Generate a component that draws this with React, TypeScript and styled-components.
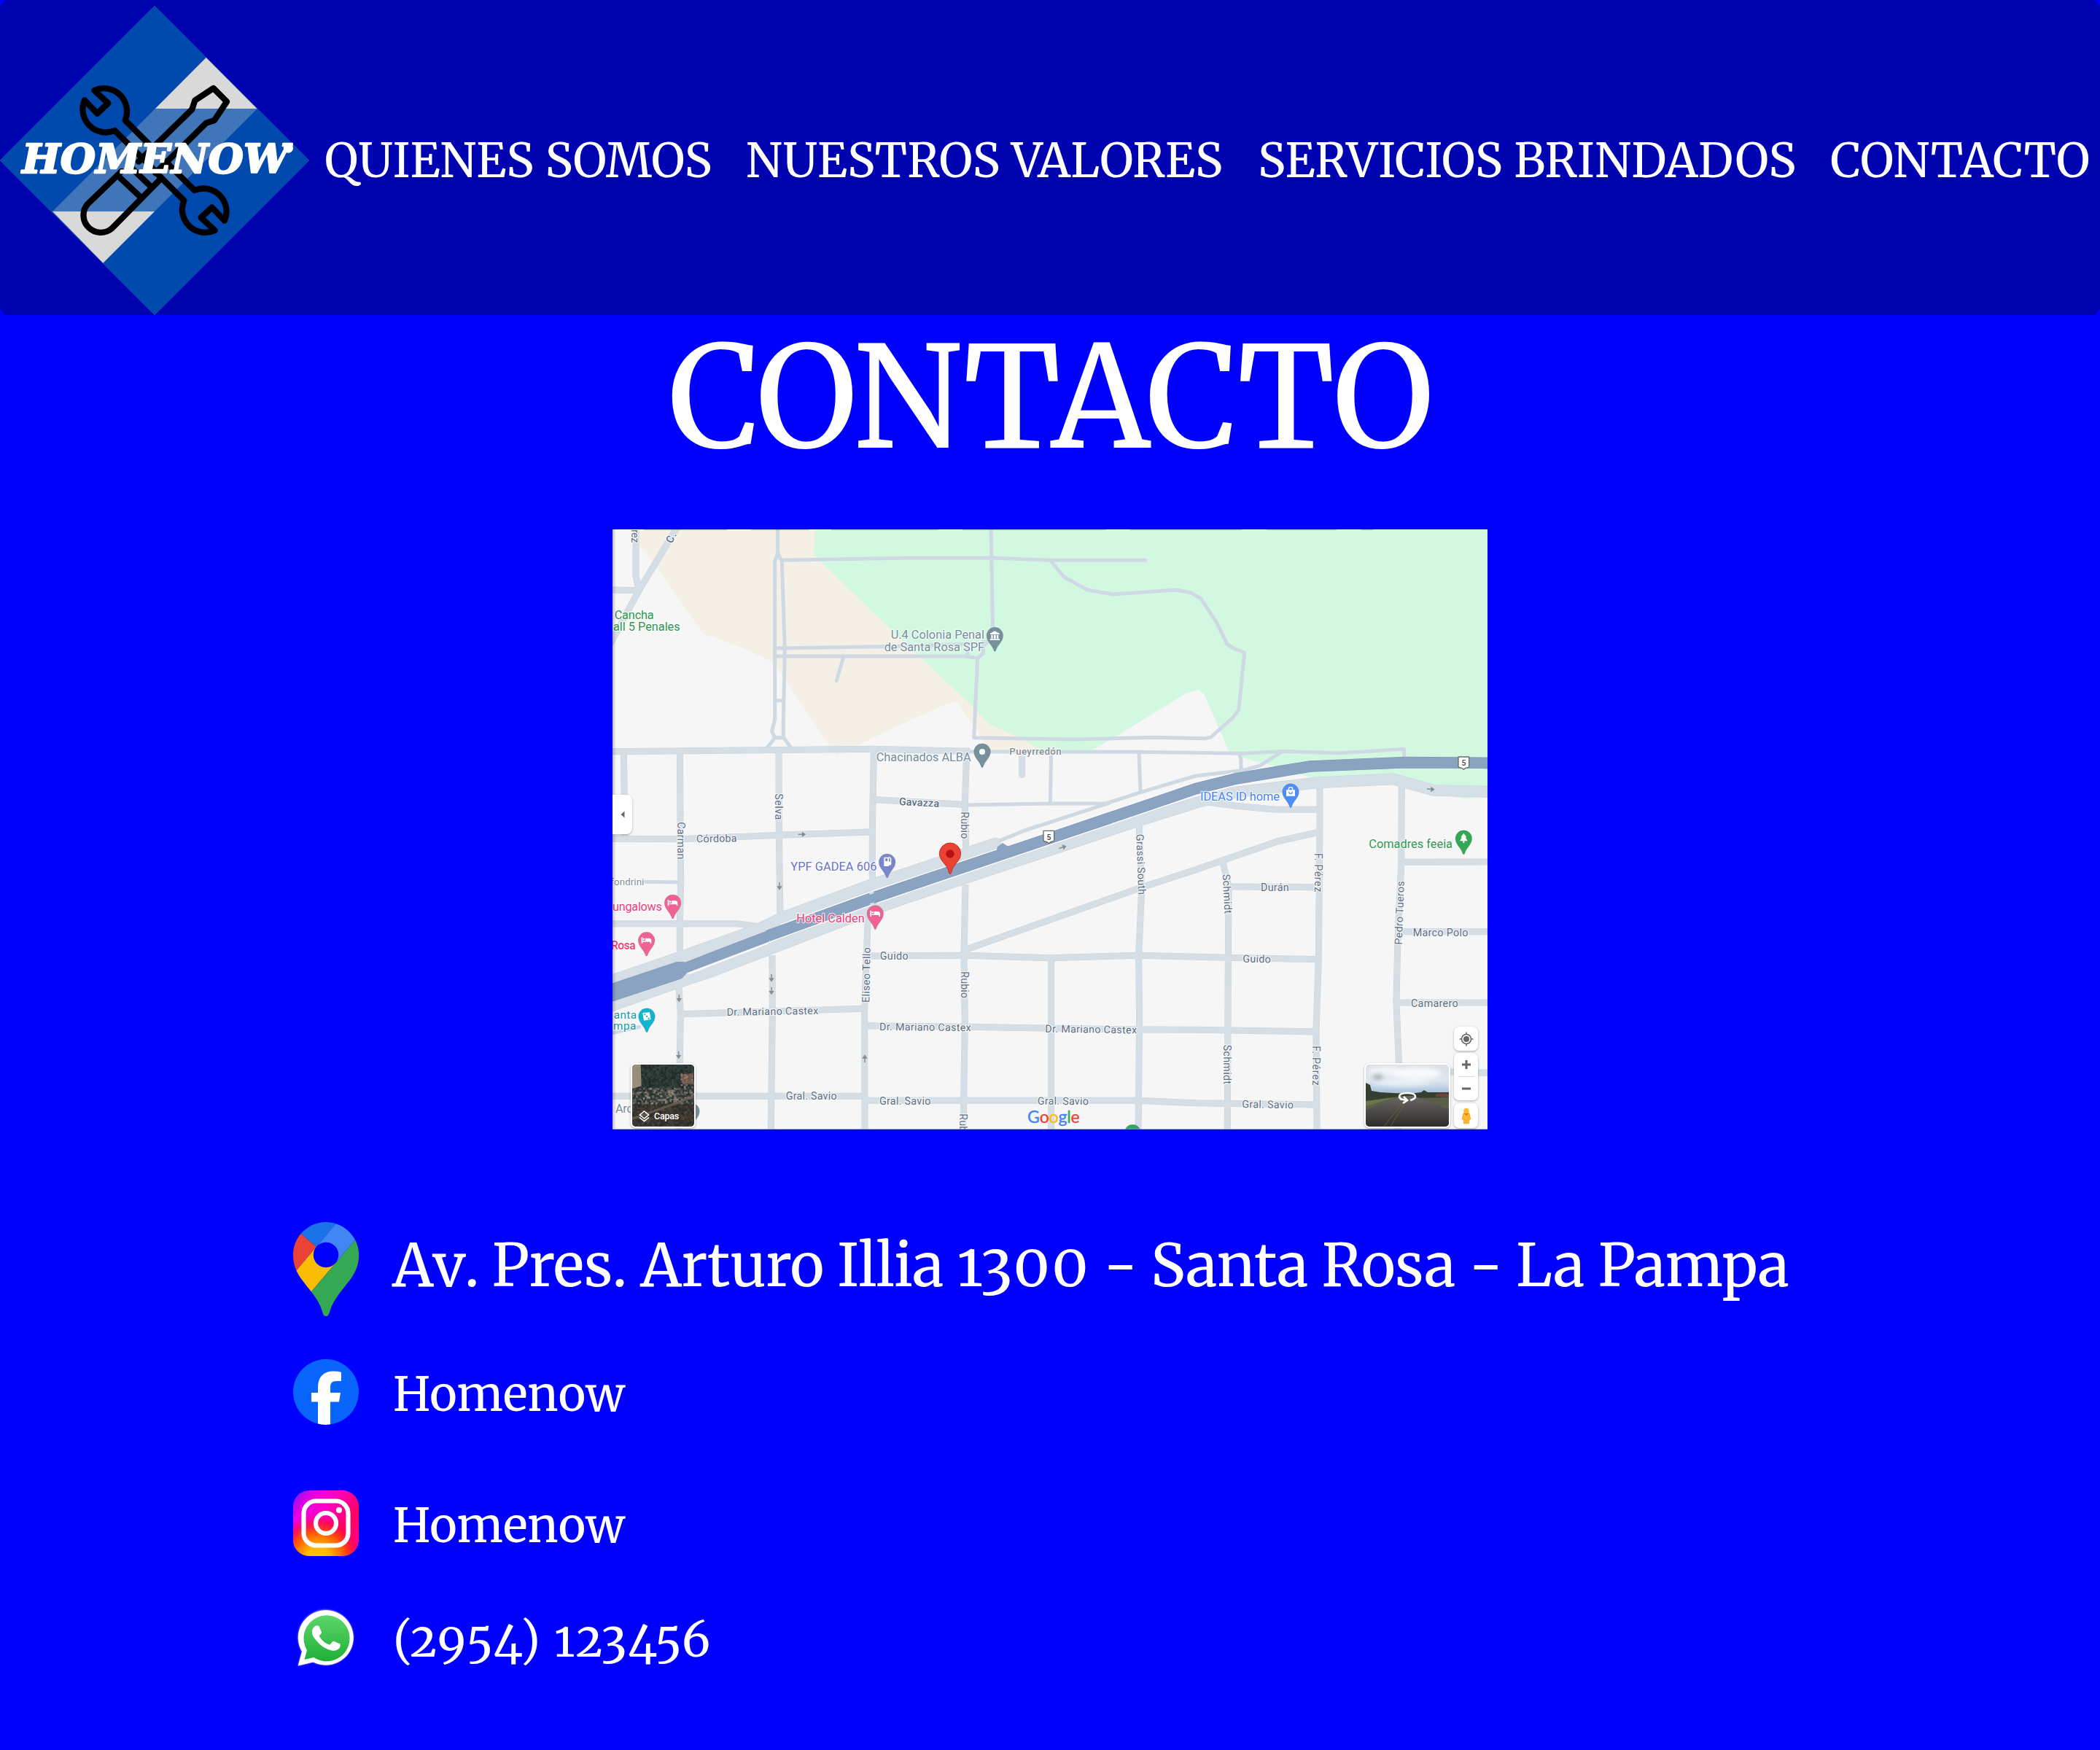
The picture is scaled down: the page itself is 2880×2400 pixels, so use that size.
import React from "react";
import styled, { createGlobalStyle } from "styled-components";

const SERIF = `Merriweather, "DejaVu Serif Condensed", "DejaVu Serif", serif`;
const MAP_FONT = `Roboto, "Liberation Sans", sans-serif`;

const GlobalStyle = createGlobalStyle`
  body { margin: 0; background: #0000ff; }
  * { box-sizing: border-box; }
`;

const Page = styled.div`
  width: 2880px;
  min-height: 2400px;
  background: #0000ff;
  color: #fff;
  font-family: ${SERIF};
  font-variant-numeric: oldstyle-nums;
`;

const Header = styled.header`
  display: flex;
  align-items: center;
  height: 432px;
  padding-top: 8px;
  background: #0004b0;
  border-radius: 12px;
`;

const LogoSvg = styled.svg`
  display: block;
  flex: none;
  width: 424px;
  height: 424px;
`;

const Nav = styled.nav`
  display: grid;
  grid-template-columns: 578px 702px 785px 1fr;
  flex: 1;
  padding-left: 21px;
`;

const NavLink = styled.a<{ $tracking?: number }>`
  color: #fff;
  font-size: 64px;
  line-height: 80px;
  white-space: nowrap;
  letter-spacing: ${(p) => p.$tracking ?? 0}px;
`;

const Title = styled.h1`
  margin: 0;
  font-size: 192px;
  font-weight: 400;
  line-height: 228px;
  letter-spacing: -2.6px;
  text-align: center;
`;

const MapFrame = styled.section`
  position: relative;
  width: 1200px;
  height: 823px;
  margin: 66px auto 0;
  overflow: hidden;
  background: #f6f6f6;
  font-family: ${MAP_FONT};
  font-variant-numeric: normal;
`;

const MapSvg = styled.svg`
  display: block;
  width: 1200px;
  height: 823px;
`;

const MapControl = styled.div<{ $x: number; $y: number; $w: number; $h: number }>`
  position: absolute;
  left: ${(p) => p.$x}px;
  top: ${(p) => p.$y}px;
  width: ${(p) => p.$w}px;
  height: ${(p) => p.$h}px;
  display: flex;
  flex-direction: column;
  align-items: center;
  justify-content: center;
  gap: 10px;
  background: #fff;
  border-radius: 7px;
  box-shadow: 0 1px 3px rgba(0, 0, 0, 0.3);
`;

const CollapseTab = styled(MapControl)`
  border-radius: 0 8px 8px 0;
`;

const Thumb = styled(MapControl)`
  border: 2px solid #fff;
  overflow: hidden;
`;

const ControlIcon = styled.svg`
  display: block;
  flex: none;
`;

const Divider = styled.span`
  width: 22px;
  height: 1px;
  background: #dcdcdc;
`;

const LayersCaption = styled.div`
  position: absolute;
  left: 9px;
  bottom: 5px;
  display: flex;
  align-items: center;
  gap: 6px;
  color: #fff;
  font-size: 12.5px;
  font-weight: 500;
  line-height: 18px;
  letter-spacing: -0.2px;
`;

const ContactList = styled.ul`
  display: flex;
  flex-direction: column;
  margin: 127px 0 0;
  padding: 0 0 0 402px;
  list-style: none;
`;

const ContactRow = styled.li<{ $before?: number }>`
  display: flex;
  align-items: center;
  gap: 46px;
  margin-top: ${(p) => p.$before ?? 0}px;
`;

const BrandIcon = styled.svg<{ $h?: number }>`
  display: block;
  flex: none;
  width: 90px;
  height: ${(p) => p.$h ?? 90}px;
`;

const ContactText = styled.span<{ $large?: boolean }>`
  font-size: ${(p) => (p.$large ? 80 : 64)}px;
  line-height: 80px;
  white-space: nowrap;
  letter-spacing: ${(p) => (p.$large ? -0.45 : 0)}px;
  margin-top: ${(p) => (p.$large ? 0 : 5)}px;
  margin-bottom: ${(p) => (p.$large ? 10 : 0)}px;
  margin-left: ${(p) => (p.$large ? 0 : 1)}px;
`;

const Unkerned = styled.span`
  font-kerning: none;
  letter-spacing: -1.4px;
`;

const Figures = styled.span`
  letter-spacing: 0.031em;
`;

const Wrench = () => (
  <path d="M590 655 L472 537 A95 95 0 0 1 348 412 L400 467 L445 425 L388 372 A95 95 0 0 1 515 495 L632 612" />
);

const Logo = () => (
  <LogoSvg viewBox="0 24 1272 1272">
    <polygon points="636,24 1272,660 636,1296 0,660" fill="#004aad" stroke="#3a3c9c" strokeWidth="2" />
    <polygon points="848,237 1058,448 638,448" fill="#d9d9d9" />
    <polygon points="638,448 1058,448 636,870 216,870" fill="#4075b9" />
    <polygon points="216,870 636,870 424,1082" fill="#d9d9d9" />
    <g fill="none" stroke="#000" strokeWidth="25" strokeLinejoin="round" strokeLinecap="round">
      <Wrench />
      <g transform="rotate(180 636 660)">
        <Wrench />
      </g>
      <path d="M570 665 L790 450 L802 413 L878 363 L933 418 L882 495 L848 506 L640 712" />
      <path d="M500 705 L360 840 A71 71 0 0 0 460 940 L662 735" />
      <path d="M484 722 L575 808 M540 690 L615 762 M575 640 L640 705" />
    </g>
    <text
      x="91"
      y="711"
      textLength="1098"
      lengthAdjust="spacingAndGlyphs"
      fontFamily={`"DejaVu Serif", serif`}
      fontSize="165"
      fontWeight="700"
      fontStyle="italic"
      fill="#fff"
      stroke="#fff"
      strokeWidth="7"
      strokeLinejoin="round"
    >
      HOMENOW
    </text>
    <circle cx="1186" cy="609" r="20" fill="#fff" />
  </LogoSvg>
);

const STREETS = [
  "M96 0V210L108 265", "M272 0L110 267L-10 490", "M0 267L108 269",
  "M0 932L1075 922L1470 931", "M46 935L51 1290", "M277 935L281 1470L277 1640V1780",
  "M272 1890L280 2010L272 2490", "M684 935L685 1260L690 1620", "M1075 930L1069 1250V1500",
  "M1085 1130L1440 1150", "M1457 930L1450 1150L1454 1345", "M1685 950V1028",
  "M0 1291L280 1292L685 1276L1060 1263", "M0 1640H510L640 1657",
  "M2450 1140L2560 1155L2720 1170L2900 1171",
  "M2910 1075V1230L2905 1780L2895 2080L2898 2490",
  "M2900 1265L2735 1302L2510 1380L2400 1418L2175 1492L1458 1745",
  "M3247 1070L3245 1400L3230 1730L3225 1965L3235 2210L3233 2490",
  "M3250 1387L3600 1386", "M3240 1673H3600", "M3230 1965H3600", "M3240 2244L3600 2254",
  "M2545 1488L2890 1490", "M2510 1385L2535 1485L2533 1780L2530 2490",
  "M1060 1773L1450 1771L1800 1781L2160 1771L2530 1780L2905 1787",
  "M280 2012L1035 1990", "M1040 2060L1450 2065L2165 2076L2400 2077L2895 2085",
  "M0 2350H1040", "M1040 2368H2160L2400 2378L2895 2385",
  "M2166 1225L2177 1500L2165 1770L2168 2050L2163 2490",
  "M1452 1480L1446 1770L1450 2050L1443 2490", "M1805 1785V2490",
  "M1066 1580L1050 1640L1037 1990L1038 2490", "M657 1770L658 2000L652 2490",
];

const LANES = [
  "M680 0V115L668 150V800L656 848L668 875H705L735 918", "M680 115L697 150L709 520L703 800V875",
  "M668 875L635 918", "M668 722H703", "M697 145L1200 136H1570L1800 145H2192",
  "M668 507L1110 500L1480 490", "M668 540H1455L1502 548L1525 528V480", "M950 545L922 640",
  "M1557 0L1565 455L1525 500", "M1460 500V535",
  "M1502 548L1487 875L1900 882L2220 874L2440 878L2462 873L2555 790L2577 758L2600 525L2555 507L2530 492L2485 400L2420 302L2378 278L2320 267L2060 285L1955 268L1857 213L1805 150",
  "M1470 932L2165 934L2600 940L2755 931L2990 938L3257 922V955",
  "M2755 931L2665 990L2590 1010L2400 1032L2172 1100L2030 1146H1800L1450 1152",
  "M2580 945L2586 965V1005", "M2166 934L2172 1095", "M1805 935L1801 1145",
  "M2040 1145L1695 1257L1595 1298", "M135 1468L270 1470", "M0 2090L110 2065",
];

const SERVICE_ROADS = [
  "M-20 1880L270 1780L600 1663L700 1614L1070 1478L1200 1436L1575 1310",
  "M-20 1984L270 1882L410 1836L680 1732L1060 1586L1200 1537L1460 1450L2180 1212L2400 1143L2560 1100L2900 1060L3210 1045L3380 1092L3620 1098",
];

const HIGHWAY = "M640 1690L1060 1538L1200 1490L1630 1345L1800 1288L2180 1160L2400 1085L2560 1045L2870 993L3260 977L3620 979";

const STREET_TEXT = "#5d6f84";
const SLATE = "#738d99";
const PINK = "#ec407a";
const GREEN = "#2f9650";

type LabelSpec = { t: string; x: number; y: number; w: number; c?: string; s?: number; r?: number; b?: boolean };

const LABELS: LabelSpec[] = [
  { t: "Cancha", x: 8, y: 387, w: 162, c: GREEN, s: 49 },
  { t: "all 5 Penales", x: 3, y: 435, w: 275, c: GREEN, s: 49 },
  { t: "U.4 Colonia Penal", x: 1145, y: 468, w: 385, c: SLATE, s: 49 },
  { t: "de Santa Rosa SPF", x: 1118, y: 518, w: 412, c: SLATE, s: 49 },
  { t: "Chacinados ALBA", x: 1085, y: 972, w: 390, c: SLATE, s: 49 },
  { t: "Pueyrredón", x: 1633, y: 945, w: 214, c: "#868d95", s: 40, b: true },
  { t: "Gavazza", x: 1178, y: 1152, w: 166, r: 3, b: true },
  { t: "Selva", x: 668, y: 1105, w: 108, r: 90 },
  { t: "Carman", x: 268, y: 1222, w: 153, r: 90 },
  { t: "rez", x: 77, y: 19, w: 54, r: 90 },
  { t: "C.", x: 244, y: 78, w: 44, r: -62, b: true },
  { t: "Rubio", x: 1433, y: 1180, w: 111, r: 90 },
  { t: "Rubio", x: 1433, y: 1837, w: 110, r: 90 },
  { t: "Rubio", x: 1427, y: 2422, w: 110, r: 90 },
  { t: "Córdoba", x: 345, y: 1306, w: 167, r: -1 },
  { t: "fondrini", x: -8, y: 1482, w: 138, c: "#868d95", s: 40 },
  { t: "YPF GADEA 606", x: 733, y: 1422, w: 354, c: "#6672c5", s: 49 },
  { t: "ungalows", x: 0, y: 1588, w: 204, c: PINK, s: 49 },
  { t: "Rosa", x: -6, y: 1745, w: 101, c: PINK, s: 47, b: true },
  { t: "Hotel Calden", x: 757, y: 1636, w: 280, c: PINK, s: 49 },
  { t: "Guido", x: 1100, y: 1788, w: 117 },
  { t: "Eliseo Tello", x: 1057, y: 1965, w: 227, r: -89 },
  { t: "Dr. Mariano Castex", x: 470, y: 2019, w: 377, r: -1 },
  { t: "Dr. Mariano Castex", x: 1098, y: 2079, w: 377, r: 0.5 },
  { t: "Dr. Mariano Castex", x: 1780, y: 2087, w: 377, r: 0.8 },
  { t: "Gral. Savio", x: 713, y: 2365, w: 210 },
  { t: "Gral. Savio", x: 1098, y: 2384, w: 211 },
  { t: "Gral. Savio", x: 1748, y: 2384, w: 211, r: 0.4 },
  { t: "Gral. Savio", x: 2590, y: 2397, w: 212, r: 1 },
  { t: "anta", x: 5, y: 2032, w: 94, c: "#1697a6", s: 46 },
  { t: "mpa", x: 3, y: 2077, w: 94, c: "#1697a6", s: 46 },
  { t: "Arq", x: 12, y: 2418, w: 74, c: SLATE, s: 49 },
  { t: "Comadres feeia", x: 3112, y: 1328, w: 344, c: GREEN, s: 49 },
  { t: "IDEAS ID home", x: 2418, y: 1134, w: 327, c: "#4285f4", s: 49 },
  { t: "Grassi South", x: 2155, y: 1272, w: 250, r: 88 },
  { t: "Schmidt", x: 2510, y: 1437, w: 163, r: 87 },
  { t: "Schmidt", x: 2515, y: 2138, w: 163, r: 90 },
  { t: "F. Pérez", x: 2890, y: 1350, w: 160, r: 90 },
  { t: "F. Pérez", x: 2879, y: 2143, w: 163, r: 90 },
  { t: "Durán", x: 2667, y: 1505, w: 116 },
  { t: "Guido", x: 2593, y: 1799, w: 115, r: 1 },
  { t: "Marco Polo", x: 3293, y: 1692, w: 227 },
  { t: "Camarero", x: 3285, y: 1983, w: 194 },
  { t: "Pedro Tueros", x: 3248, y: 1727, w: 262, r: -88 },
];

const Label = ({ t, x, y, w, c = STREET_TEXT, s = 43, r = 0, b }: LabelSpec) => (
  <text
    x={x}
    y={y}
    textLength={w}
    fontSize={s}
    fontWeight={b ? 500 : 400}
    fill={c}
    stroke="#fff"
    strokeOpacity="0.75"
    strokeWidth="7"
    strokeLinejoin="round"
    paintOrder="stroke"
    transform={r ? `rotate(${r} ${x} ${y})` : undefined}
  >
    {t}
  </text>
);

const BED = "M-21 -13h5v15h11v-11h14q11 0 11 10v11h-5v-6h-31v6h-5zM-15 -5a4 4 0 1 0 8 0a4 4 0 1 0 -8 0z";
const BAG = "M-18 -8h8v-3q0 -10 10 -10q10 0 10 10v3h8v25h-36zM-6 -8h12v-3q0 -6 -6 -6q-6 0 -6 6zM-9 -1q0 10 9 10q9 0 9 -10h-4q0 6 -5 6q-5 0 -5 -6z";
const BANK = "M0 -19L19 -9V-5H-19V-9zM-15 -3h7v15h-7zM-4 -3h8v15h-8zM8 -3h7v15h-7zM-20 14h40v5h-40z";
const PUMP = "M-13 -20h20v18h5v-12l-6 -6l3 -3l8 8v22q0 6 -6 6q-5 0 -4 -6v-5v15h-20zM-8 -15v11h10v-11z";
const TREE = "M0 -22L12 -5H7L16 10H3V18H-3V10H-16L-7 -5H-12z";
const DICE = "M-17 -15L12 -17L17 12L-12 17zM-11 -11v6h6v-6zM-3 -3v6h6v-6zM5 5v6h6v-6z";
const DOT = "M-12 0a12 12 0 1 0 24 0a12 12 0 1 0 -24 0z";

const PINS: [number, number, string, string][] = [
  [1573, 455, "#78909c", BANK],
  [1521, 933, "#78909c", DOT],
  [2790, 1098, "#4f8ef7", BAG],
  [3502, 1290, "#34a853", TREE],
  [1130, 1387, "#7986cb", PUMP],
  [1081, 1599, "#f06292", BED],
  [248, 1555, "#f06292", BED],
  [140, 1709, "#f06292", BED],
  [141, 2022, "#12b5cb", DICE],
  [2140, 2501, "#34a853", DOT],
  [324, 2412, "#78909c", DOT],
];

const Pin = ({ x, y, color, glyph }: { x: number; y: number; color: string; glyph: string }) => (
  <g transform={`translate(${x} ${y})`}>
    <path
      d="M0 65C-3 65 -4 61 -6 56C-12 38 -34 24 -34 0A34 34 0 0 1 34 0C34 24 12 38 6 56C4 61 3 65 0 65Z"
      fill={color}
      stroke="#455a64"
      strokeOpacity="0.35"
      strokeWidth="1.5"
    />
    <path d={glyph} fill="#fff" fillRule="evenodd" />
  </g>
);

const ARROWS: [number, number, number][] = [
  [778, 1273, 0], [687, 1484, 90], [654, 1862, 90], [654, 1915, 90], [274, 1945, 90],
  [272, 2179, 90], [1038, 2197, -90], [3365, 1087, 4], [1851, 1326, -18],
];

const Shield = ({ x, y }: { x: number; y: number }) => (
  <g transform={`translate(${x} ${y})`}>
    <path
      d="M-22 -26H22V12Q22 17 16 18L6 21L0 26L-6 21L-16 18Q-22 17 -22 12Z"
      fill="#fff"
      stroke="#6b6b6b"
      strokeWidth="4"
      strokeLinejoin="round"
    />
    <text x="0" y="11" fontSize="31" fontWeight="500" fill="#444" textAnchor="middle">5</text>
  </g>
);

const GOOGLE: [string, string][] = [
  ["G", "#4285f4"], ["o", "#ea4335"], ["o", "#fbbc04"], ["g", "#4285f4"], ["l", "#34a853"], ["e", "#ea4335"],
];

const CityMap = () => (
  <MapSvg viewBox="0 18 3600 2469">
    <rect y="18" width="3600" height="2469" fill="#f6f6f6" />
    <path d="M108 18V85L165 145L370 445L540 508L655 562L680 590L920 948L1000 910L1200 815L1365 741L1415 725L1500 845L1545 925H1780L1560 815L835 110V18Z" fill="#f5f0e5" />
    <path d="M835 18L828 125L855 150L1140 425L1480 745L1550 820L1660 868L1750 918V928H1970L2075 868L2360 692L2410 678L2435 698L2480 800L2535 930L2600 960L2715 990L2830 1025L2900 1045L3200 1068L3510 1127L3600 1115V18Z" fill="#d3f8e2" />
    <g fill="none" strokeLinejoin="round">
      <g stroke="#cfd9e4" strokeWidth="15" strokeLinecap="round">
        {LANES.map((d) => <path key={d} d={d} />)}
      </g>
      <g stroke="#c8d3dc" strokeWidth="27">
        {STREETS.map((d) => <path key={d} d={d} />)}
      </g>
      <circle cx="1685" cy="1028" r="11" stroke="#d5dee5" strokeWidth="5" fill="#d5dee5" />
      <g stroke="#c6d1da" strokeWidth="47" strokeLinecap="round">
        {SERVICE_ROADS.map((d) => <path key={d} d={d} />)}
      </g>
      <g stroke="#d5dee5" strokeWidth="24">
        {STREETS.map((d) => <path key={d} d={d} />)}
      </g>
      <g stroke="#d7dfe6" strokeWidth="44" strokeLinecap="round">
        {SERVICE_ROADS.map((d) => <path key={d} d={d} />)}
      </g>
      <path d="M700 1668L1060 1538M1080 1531L1200 1490L1630 1345L1800 1288L2180 1160L2400 1085L2560 1045" stroke="#f8f9fa" strokeWidth="56" />
      <path d="M310 1847L640 1720" stroke="#f8f9fa" strokeWidth="8" />
      <path d="M-20 1893L265 1798L300 1799L645 1667V1713L305 1842L285 1865L-20 1966Z" fill="#8aa3c0" stroke="#7893b5" strokeWidth="2" />
      <path d={HIGHWAY} stroke="#7893b5" strokeWidth="47" />
      <path d={HIGHWAY} stroke="#8aa3c0" strokeWidth="44" />
      <path d="M1580 1340L1583 1325L1605 1308L1630 1324V1345Z" fill="#8aa3c0" />
      <path d="M1057 1517L1075 1511M1060 1562L1076 1557" stroke="#d5dee5" strokeWidth="9" />
    </g>
    <g stroke="#858d93" strokeWidth="4.5" fill="#858d93">
      {ARROWS.map(([x, y, r]) => (
        <path key={`${x}-${y}`} d="M-14 0H8M4 -7L14 0L4 7Z" transform={`translate(${x} ${y}) rotate(${r})`} />
      ))}
    </g>
    <Shield x={1795} y={1284} />
    <Shield x={3502} y={980} />
    {LABELS.map((l) => <Label key={`${l.t}-${l.x}-${l.y}`} {...l} />)}
    {PINS.map(([x, y, color, glyph]) => <Pin key={`${x}-${y}`} x={x} y={y} color={color} glyph={glyph} />)}
    <path
      d="M1389 1436C1385 1436 1384 1430 1382 1422C1376 1396 1345 1382 1345 1352A44 44 0 0 1 1433 1352C1433 1382 1402 1396 1396 1422C1394 1430 1393 1436 1389 1436Z"
      fill="#ea4335"
      stroke="#c5221f"
      strokeWidth="2.5"
    />
    <circle cx="1389" cy="1353" r="17" fill="#b31412" />
    <text
      x="1707"
      y="2459"
      textLength="215"
      fontFamily={`Lato, Inter, sans-serif`}
      fontSize="69"
      strokeWidth="1.2"
    >
      {GOOGLE.map(([c, f], i) => <tspan key={i} fill={f} stroke={f}>{c}</tspan>)}
    </text>
    <defs>
      <linearGradient id="edge" x1="0" x2="1" y1="0" y2="0">
        <stop offset="0" stopColor="#000" stopOpacity="0.22" />
        <stop offset="1" stopColor="#000" stopOpacity="0" />
      </linearGradient>
    </defs>
    <rect y="18" width="15" height="2469" fill="url(#edge)" />
    <path d="M130 19H470M570 19H810M900 19H1340M1440 19H2030M2130 19H2590M2690 19H2980M3080 19H3130" stroke="#5b6b66" strokeOpacity="0.3" strokeWidth="5" />
    <rect y="2484" width="3600" height="3" fill="#7b8fd8" opacity="0.7" />
  </MapSvg>
);

/* Deterministic speckle for the satellite preview. */
const speckles = (() => {
  let seed = 7;
  const rnd = () => (seed = (seed * 16807) % 2147483647) / 2147483647;
  const dark = ["#22312f", "#2f403c", "#1b2624", "#3a4843", "#2a3a37"];
  const town = ["#8d8478", "#5d5a52", "#a3968a", "#3c453f", "#6c655c"];
  const earth = ["#3a322c", "#4a4038", "#2c2824", "#554a40", "#33302b"];
  const out: { x: number; y: number; w: number; c: string }[] = [];
  for (let y = 0; y < 88; y += 2.5)
    for (let x = 0; x < 88; x += 2.5) {
      const set = y < 32 ? (x > 66 && y > 12 && rnd() > 0.5 ? town : dark) : y < 55 ? (rnd() > 0.4 ? town : dark) : earth;
      out.push({ x: x + rnd(), y: y + rnd(), w: 2 + rnd() * 1.6, c: set[Math.floor(rnd() * 5)] });
    }
  return out;
})();

const SatelliteThumb = () => (
  <ControlIcon width="86" height="86" viewBox="0 0 88 88">
    <rect width="88" height="88" fill="#333835" />
    {speckles.map((s, i) => <rect key={i} x={s.x} y={s.y} width={s.w} height={s.w} fill={s.c} opacity="0.75" />)}
    <path d="M0 0H12L13 30L0 34Z" fill="#b5a38c" opacity="0.8" />
    <path d="M68 14L86 12V28L70 26Z" fill="#b97b62" opacity="0.45" />
    <path d="M0 76L40 62L88 44" fill="none" stroke="#6b5f54" strokeWidth="3.5" opacity="0.8" />
  </ControlIcon>
);

const StreetThumb = () => (
  <ControlIcon width="115" height="86" viewBox="0 0 115 86">
    <defs>
      <linearGradient id="sky" x1="0" y1="0" x2="0" y2="1">
        <stop offset="0" stopColor="#d9dee5" />
        <stop offset="0.5" stopColor="#dfe5ee" />
        <stop offset="0.8" stopColor="#b0c8e2" />
        <stop offset="1" stopColor="#aab7c2" />
      </linearGradient>
      <linearGradient id="road" x1="0" y1="0" x2="0" y2="1">
        <stop offset="0" stopColor="#6a6864" />
        <stop offset="1" stopColor="#2b2a29" />
      </linearGradient>
      <filter id="cloud" x="-30%" y="-80%" width="160%" height="260%">
        <feGaussianBlur stdDeviation="3" />
      </filter>
    </defs>
    <rect width="115" height="44" fill="url(#sky)" />
    <g filter="url(#cloud)">
      <ellipse cx="28" cy="9" rx="26" ry="6" fill="#f3f5f8" />
      <ellipse cx="17" cy="17" rx="7" ry="4" fill="#9aa2ad" />
      <ellipse cx="70" cy="12" rx="34" ry="8" fill="#f8fafc" />
      <ellipse cx="50" cy="25" rx="40" ry="4" fill="#eef2f7" />
    </g>
    <rect y="42" width="115" height="44" fill="#5b5f48" />
    <path d="M0 25L6 28L8 36L20 38L38 39L60 40L76 38L80 35L85 38L115 38V45L66 46H40L0 50Z" fill="#353f31" />
    <path d="M96 41L104 39L115 40V45L96 44Z" fill="#6e4238" />
    <path d="M48 43H66L115 62V87H0V62Z" fill="url(#road)" />
    <path d="M0 50L45 44L0 57Z" fill="#6e7250" />
    <path d="M54 48L24 86M57 48L33 86" stroke="#7d6a35" strokeWidth="0.7" />
    <g fill="none" stroke="#fff" strokeWidth="2.6">
      <path d="M50 48Q46 46 46 44Q46 39 57 39Q68 39 68 44Q68 47 61 49" />
      <path d="M47 47L56 49M52 44L57 49L51 53" />
    </g>
  </ControlIcon>
);

const FacebookIcon = () => (
  <BrandIcon viewBox="0 0 90 90">
    <clipPath id="fb"><circle cx="45" cy="45" r="45" /></clipPath>
    <g clipPath="url(#fb)">
      <rect width="90" height="90" fill="#0866ff" />
      <path d="M34 90V58.5H25V46H34V39C34 24 42 16.5 55 16.5Q61 16.5 66 17.7V30H60C53 30 51 33 51 38.5V46H65L63 58.5H51V90Z" fill="#fff" />
    </g>
  </BrandIcon>
);

const InstagramIcon = () => (
  <BrandIcon viewBox="0 0 90 90">
    <defs>
      <linearGradient id="ig1" x1="0" y1="0" x2="1" y2="0.7">
        <stop offset="0" stopColor="#7a12ff" />
        <stop offset="0.22" stopColor="#e800e0" />
        <stop offset="0.45" stopColor="#ff00c8" />
        <stop offset="0.8" stopColor="#ff0062" />
        <stop offset="1" stopColor="#ff0088" />
      </linearGradient>
      <radialGradient id="ig2" cx="0.38" cy="1.05" r="0.68">
        <stop offset="0" stopColor="#ffd000" />
        <stop offset="0.28" stopColor="#ffb800" />
        <stop offset="0.6" stopColor="#ff5a00" />
        <stop offset="0.8" stopColor="#ff1830" stopOpacity="0.75" />
        <stop offset="1" stopColor="#ff0060" stopOpacity="0" />
      </radialGradient>
    </defs>
    <rect width="90" height="90" rx="22" fill="url(#ig1)" />
    <rect width="90" height="90" rx="22" fill="url(#ig2)" />
    <g fill="none" stroke="#fff" strokeWidth="6.2">
      <rect x="14.5" y="14.5" width="61" height="61" rx="17" />
      <circle cx="45" cy="45" r="14" />
    </g>
    <circle cx="63" cy="27" r="4.1" fill="#fff" />
  </BrandIcon>
);

const WhatsAppIcon = () => (
  <BrandIcon viewBox="402 2201 90 90">
    <defs>
      <linearGradient id="wa" x1="0" y1="0" x2="0" y2="1">
        <stop offset="0" stopColor="#5dd669" />
        <stop offset="1" stopColor="#1faf38" />
      </linearGradient>
      <filter id="glow" x="-20%" y="-20%" width="140%" height="140%">
        <feGaussianBlur stdDeviation="1.2" />
      </filter>
    </defs>
    <g fill="#fff">
      <path d="M408.7 2284.5L414 2265A38 38 0 1 1 429.5 2279.5Z" filter="url(#glow)" opacity="0.6" />
      <path d="M408.7 2284.5L414 2265A38 37.7 0 1 1 429.5 2279.5Z" />
    </g>
    <path d="M417.5 2276L421 2263A31.5 31.5 0 1 1 430.5 2273Z" fill="url(#wa)" />
    <g transform="translate(408.7 2210) scale(3.21 3.05)">
      <path fill="#fff" d="M17.472 14.382c-.297-.149-1.758-.867-2.03-.967-.273-.099-.471-.148-.67.15-.197.297-.767.966-.94 1.164-.173.199-.347.223-.644.075-.297-.15-1.255-.463-2.39-1.475-.883-.788-1.48-1.761-1.653-2.059-.173-.297-.018-.458.13-.606.134-.133.298-.347.446-.52.149-.174.198-.298.298-.497.099-.198.05-.371-.025-.52-.075-.149-.669-1.612-.916-2.207-.242-.579-.487-.5-.669-.51-.173-.008-.371-.01-.57-.01-.198 0-.52.074-.792.372-.272.297-1.04 1.016-1.04 2.479 0 1.462 1.065 2.875 1.213 3.074.149.198 2.096 3.2 5.077 4.487.709.306 1.262.489 1.694.625.712.227 1.36.195 1.871.118.571-.085 1.758-.719 2.006-1.413.248-.694.248-1.289.173-1.413-.074-.124-.272-.198-.57-.347" />
    </g>
  </BrandIcon>
);

const MapsIcon = () => (
  <BrandIcon $h={129} viewBox="0 0 92.3 132.3">
    <path fill="#1a73e8" d="M60.2 2.2C55.8.8 51 0 46.1 0 32 0 19.3 6.4 10.8 16.5l21.8 18.3L60.2 2.2z" />
    <path fill="#ea4335" d="M10.8 16.5C4.1 24.5 0 34.9 0 46.1c0 8.7 1.7 15.7 4.6 22l28-33.3-21.8-18.3z" />
    <path fill="#4285f4" d="M46.2 28.5c9.8 0 17.7 7.9 17.7 17.7 0 4.3-1.6 8.3-4.2 11.4 0 0 13.9-16.6 27.5-32.7-5.6-10.8-15.3-19-27-22.7L32.6 34.8c3.3-3.8 8.1-6.3 13.6-6.3" />
    <path fill="#fbbc04" d="M46.2 63.8c-9.8 0-17.7-7.9-17.7-17.7 0-4.3 1.5-8.3 4.1-11.3l-28 33.3c4.8 10.6 12.8 19.2 21 29.9l34.1-40.5c-3.3 3.9-8.1 6.3-13.5 6.3" />
    <path fill="#34a853" d="M59.1 109.2c15.4-24.1 33.3-35 33.3-63 0-7.7-1.9-14.9-5.2-21.3L25.6 98c2.6 3.4 5.3 7.3 7.9 11.3 9.4 14.5 6.8 23.1 12.8 23.1s3.4-8.7 12.8-23.2" />
  </BrandIcon>
);

export default function App() {
  return (
    <Page>
      <GlobalStyle />
      <Header>
        <Logo />
        <Nav>
          <NavLink>QUIENES SOMOS</NavLink>
          <NavLink $tracking={0.12}>NUESTROS VALORES</NavLink>
          <NavLink $tracking={0.15}>SERVICIOS BRINDADOS</NavLink>
          <NavLink>CONTACTO</NavLink>
        </Nav>
      </Header>
      <Title>CONTACTO</Title>
      <MapFrame>
        <CityMap />
        <CollapseTab $x={0} $y={364} $w={27} $h={54}>
          <ControlIcon width="8" height="10" viewBox="0 0 8 10">
            <path d="M6.5 0.5V9.5L1.5 5Z" fill="#666" />
          </ControlIcon>
        </CollapseTab>
        <Thumb $x={25} $y={732} $w={89} $h={89}>
          <SatelliteThumb />
          <LayersCaption>
            <ControlIcon width="15" height="16" viewBox="0 0 15 16" fill="none" stroke="#fff" strokeWidth="1.6">
              <path d="M7.5 1L13.5 6L7.5 11L1.5 6Z" />
              <path d="M1 9.5L7.5 14.7L14 9.5" />
            </ControlIcon>
            Capas
          </LayersCaption>
        </Thumb>
        <Thumb $x={1031} $y={732} $w={118} $h={89}>
          <StreetThumb />
        </Thumb>
        <MapControl $x={1154} $y={682} $w={33} $h={33}>
          <ControlIcon width="20" height="20" viewBox="0 0 20 20" fill="none" stroke="#666" strokeWidth="1.6">
            <circle cx="10" cy="10" r="6.5" />
            <circle cx="10" cy="10" r="3.2" fill="#666" />
            <path d="M10 0.5V3.5M10 16.5V19.5M0.5 10H3.5M16.5 10H19.5" />
          </ControlIcon>
        </MapControl>
        <MapControl $x={1154} $y={718} $w={33} $h={65}>
          <ControlIcon width="12" height="12" viewBox="0 0 12 12">
            <path d="M6 0V12M0 6H12" stroke="#666" strokeWidth="3" />
          </ControlIcon>
          <Divider />
          <ControlIcon width="12" height="12" viewBox="0 0 12 12">
            <path d="M0 6H12" stroke="#666" strokeWidth="3" />
          </ControlIcon>
        </MapControl>
        <MapControl $x={1154} $y={787} $w={33} $h={34}>
          <ControlIcon width="14" height="23" viewBox="0 0 14 23">
            <path d="M3 7.5H11L13 16H11L10.5 22H7.5V17H6.5V22H3.5L3 16H1Z" fill="#fbb62c" stroke="#e09a1a" strokeWidth="0.6" />
            <path d="M4 8L7 11L10 8Z" fill="#e5731c" />
            <circle cx="7" cy="4.5" r="3.8" fill="#fbbc2f" />
          </ControlIcon>
        </MapControl>
      </MapFrame>
      <ContactList>
        <ContactRow>
          <MapsIcon />
          <ContactText $large>
            <Unkerned>Av.</Unkerned> Pres. Arturo Illia <Figures>1300</Figures> - Santa Rosa - La Pampa
          </ContactText>
        </ContactRow>
        <ContactRow $before={59}>
          <FacebookIcon />
          <ContactText>Homenow</ContactText>
        </ContactRow>
        <ContactRow $before={90}>
          <InstagramIcon />
          <ContactText>Homenow</ContactText>
        </ContactRow>
        <ContactRow $before={67}>
          <WhatsAppIcon />
          <ContactText>
            <Figures>(2954) 123456</Figures>
          </ContactText>
        </ContactRow>
      </ContactList>
    </Page>
  );
}
